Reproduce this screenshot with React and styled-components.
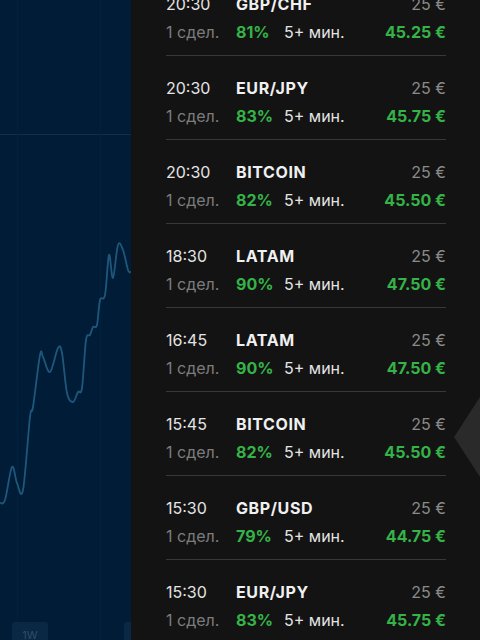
import styled, { createGlobalStyle } from "styled-components";

const Global = createGlobalStyle`
  html, body {
    margin: 0;
    padding: 0;
    background: #131313;
  }
  body {
    font-family: Inter, "Noto Sans", "DejaVu Sans", sans-serif;
  }
`;

const Screen = styled.div`
  width: 480px;
  height: 640px;
  display: flex;
  overflow: hidden;
  position: relative;
`;

const ChartArea = styled.div`
  width: 131px;
  height: 640px;
  flex-shrink: 0;
  background: #011c37;
  position: relative;
  overflow: hidden;
`;

const RangeButton = styled.div`
  position: absolute;
  left: ${(p) => p.left}px;
  bottom: -4px;
  width: 36px;
  height: 22px;
  border-radius: 3px;
  background: #0a2744;
  color: #2f4d6a;
  font-size: 11px;
  display: flex;
  justify-content: center;
  padding-top: 6px;
  box-sizing: border-box;
`;

const Panel = styled.div`
  flex: 1;
  background: #131313;
  padding: 0 34px 0 35px;
  overflow: hidden;
`;

const List = styled.div`
  margin-top: -28px;
`;

const Row = styled.div`
  padding: 20px 0 11px;
  border-bottom: 1px solid #383838;
  display: flex;
  flex-direction: column;
  gap: 4px;
`;

const Line = styled.div`
  display: grid;
  grid-template-columns: 70px 48px 1fr auto;
  align-items: center;
  height: 24px;
  line-height: 24px;
  font-size: 16px;
`;

const Time = styled.span`
  color: #e4e4e4;
`;

const Name = styled.span`
  grid-column: 2 / 4;
  color: #f0f0f0;
  font-weight: 700;
  letter-spacing: 0.6px;
`;

const Muted = styled.span`
  color: #8a8a8a;
  text-align: right;
  white-space: nowrap;
`;

const Deals = styled.span`
  color: #7c7c7c;
  white-space: nowrap;
`;

const Percent = styled.span`
  color: #35b348;
  font-weight: 700;
`;

const Duration = styled.span`
  color: #e4e4e4;
`;

const Payout = styled.span`
  color: #35b348;
  font-weight: 700;
  text-align: right;
  white-space: nowrap;
`;

const Handle = styled.div`
  position: absolute;
  right: 0;
  top: 397px;
  width: 26px;
  height: 80px;
  background: #2a2a2a;
  clip-path: polygon(0 50%, 100% 0, 100% 100%);
`;

const trades = [
  { time: "20:30", name: "GBP/CHF", pct: 81, pay: "45.25" },
  { time: "20:30", name: "EUR/JPY", pct: 83, pay: "45.75" },
  { time: "20:30", name: "BITCOIN", pct: 82, pay: "45.50" },
  { time: "18:30", name: "LATAM", pct: 90, pay: "47.50" },
  { time: "16:45", name: "LATAM", pct: 90, pay: "47.50" },
  { time: "15:45", name: "BITCOIN", pct: 82, pay: "45.50" },
  { time: "15:30", name: "GBP/USD", pct: 79, pay: "44.75" },
  { time: "15:30", name: "EUR/JPY", pct: 83, pay: "45.75" },
];

const chartPoints = [
  [0, 503], [5, 500], [12, 467], [17, 483], [23, 490], [30, 417], [33, 407],
  [40, 355], [43, 357], [50, 372], [58, 348], [62, 353], [67, 393], [73, 402],
  [78, 392], [82, 388], [86, 340], [90, 335], [93, 327], [97, 325], [100, 300],
  [105, 295], [109, 255], [113, 278], [118, 245], [123, 250], [128, 270], [131, 272],
];

// catmull-rom -> cubic bezier for a softer line
function smoothPath(pts) {
  let d = `M${pts[0][0]} ${pts[0][1]}`;
  for (let i = 0; i < pts.length - 1; i++) {
    const p0 = pts[i - 1] || pts[i];
    const p1 = pts[i];
    const p2 = pts[i + 1];
    const p3 = pts[i + 2] || p2;
    const c1x = p1[0] + (p2[0] - p0[0]) / 6;
    const c1y = p1[1] + (p2[1] - p0[1]) / 6;
    const c2x = p2[0] - (p3[0] - p1[0]) / 6;
    const c2y = p2[1] - (p3[1] - p1[1]) / 6;
    d += ` C${c1x.toFixed(1)} ${c1y.toFixed(1)} ${c2x.toFixed(1)} ${c2y.toFixed(1)} ${p2[0]} ${p2[1]}`;
  }
  return d;
}

function Chart() {
  return (
    <svg width="131" height="640" viewBox="0 0 131 640" style={{ display: "block" }}>
      <line x1="0" y1="134.5" x2="131" y2="134.5" stroke="#0e3050" strokeWidth="1" />
      <line x1="100.5" y1="0" x2="100.5" y2="640" stroke="#03213f" strokeWidth="1" />
      <line x1="17.5" y1="0" x2="17.5" y2="640" stroke="#03213f" strokeWidth="1" />
      <path d={smoothPath(chartPoints)} fill="none" stroke="#1d587c" strokeWidth="1.8" strokeLinejoin="round" />
    </svg>
  );
}

export default function App() {
  return (
    <>
      <Global />
      <Screen>
        <ChartArea>
          <Chart />
          <RangeButton left={12}>1W</RangeButton>
          <RangeButton left={124} />
        </ChartArea>
        <Panel>
          <List>
            {trades.map((t, i) => (
              <Row key={i}>
                <Line>
                  <Time>{t.time}</Time>
                  <Name>{t.name}</Name>
                  <Muted>25 €</Muted>
                </Line>
                <Line>
                  <Deals>1 сдел.</Deals>
                  <Percent>{t.pct}%</Percent>
                  <Duration>5+ мин.</Duration>
                  <Payout>{t.pay} €</Payout>
                </Line>
              </Row>
            ))}
          </List>
        </Panel>
        <Handle />
      </Screen>
    </>
  );
}
